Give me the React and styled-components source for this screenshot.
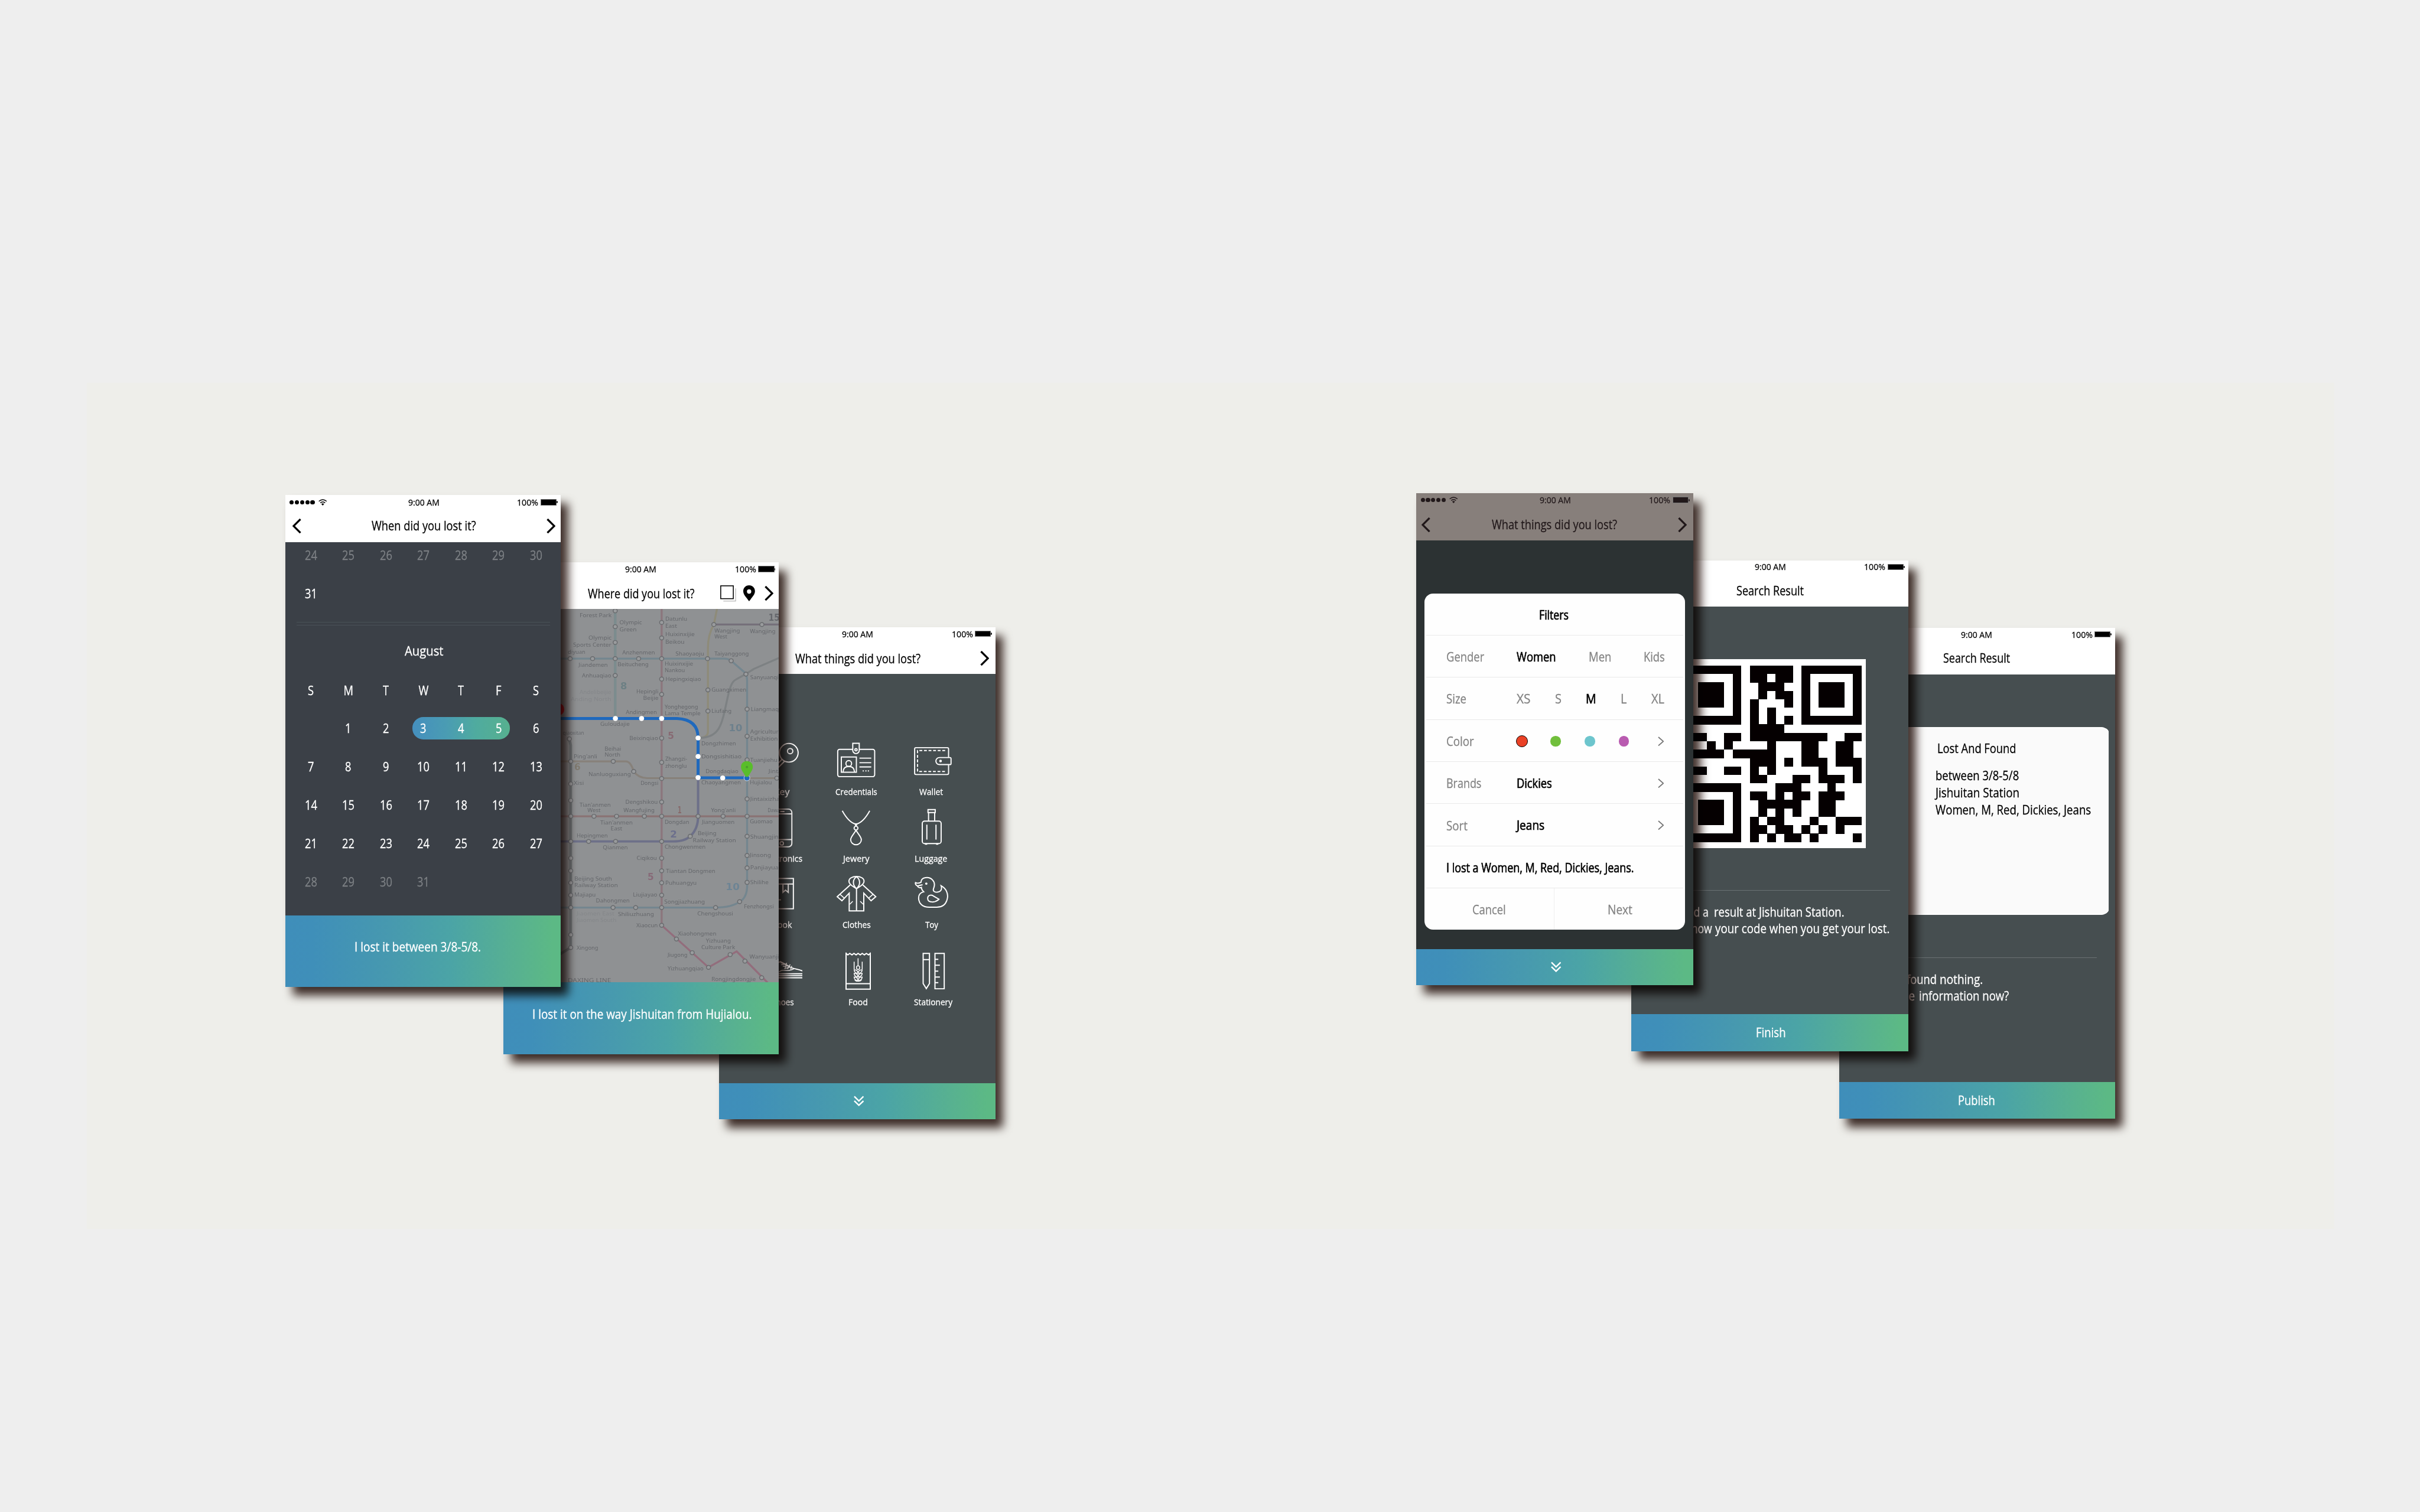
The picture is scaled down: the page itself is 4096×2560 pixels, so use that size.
import React, { useLayoutEffect, useRef, useState } from "react";
import styled, { createGlobalStyle, css } from "styled-components";

const GlobalStyle = createGlobalStyle`
  html, body { margin: 0; padding: 0; background: #eeeeee; overflow: hidden; }
  * { box-sizing: border-box; }
`;

const ramp = "linear-gradient(90deg, #3f8eba 0%, #3f8fb9 10%, #4799af 38%, #4ba4a6 60%, #57b092 82%, #5cb985 97%)";

/* ---------- canvas ---------- */

const Board = styled.main`
  position: relative;
  width: 4232px;
  height: 2645px;
  zoom: 0.967864;
  overflow: hidden;
  background: #eeeeee;
  font-family: "Open Sans", "Noto Sans", sans-serif;
  font-size: 22.5px;
  -webkit-text-stroke: 0.3px currentColor;
  color: #000;
`;

const Band = styled.div`
  position: absolute;
  left: 152px;
  top: 670px;
  width: 3930px;
  height: 1480px;
  background: #eeeeea;
`;

const place = css`
  position: absolute;
  left: ${(p) => p.$x}px;
  top: ${(p) => p.$y}px;
  width: ${(p) => p.$w}px;
  height: ${(p) => p.$h}px;
`;

const Shadow = styled.div`
  ${place}
  transform: translate(13px, 15px);
  background: #42312c;
  filter: blur(8px);
  mix-blend-mode: multiply;
`;

const Phone = styled.section`
  ${place}
  display: flex;
  flex-direction: column;
  overflow: hidden;
  background: ${(p) => p.$bg};
`;

/* ---------- fitted text ---------- */

const FitBox = styled.span`
  display: inline-flex;
  flex: none;
  width: ${(p) => p.$w + 2}px;
  margin: 0 -1px;
  line-height: 1.3;
`;

const FitInk = styled.span`
  flex: none;
  white-space: pre;
  transform-origin: 0 50%;
`;

function Fit({ w, children }) {
  const box = useRef(null);
  const ink = useRef(null);
  const [scale, setScale] = useState(1);
  useLayoutEffect(() => {
    const a = box.current.offsetWidth;
    const b = ink.current.offsetWidth;
    if (b) setScale(a / b);
  }, [w, children]);
  return (
    <FitBox $w={w} ref={box}>
      <FitInk ref={ink} style={{ transform: `scaleX(${scale})` }}>{children}</FitInk>
    </FitBox>
  );
}

/* ---------- header ---------- */

const Header = styled.header`
  flex: none;
  height: ${(p) => p.$h}px;
  background: ${(p) => (p.$dim ? "#877f7b" : "#ffffff")};
  color: ${(p) => (p.$dim ? "#21181a" : "#000000")};
`;

const StatusBar = styled.div`
  display: grid;
  grid-template-columns: 1fr auto 1fr;
  align-items: center;
  height: ${(p) => p.$h}px;
  padding: 0 6px 0 ${(p) => p.$left}px;
  font-size: 15px;
`;

const Signal = styled.div`
  display: flex;
  align-items: center;
  gap: 1.7px;
`;

const Dot = styled.i`
  width: 7.4px;
  height: 7.4px;
  border-radius: 50%;
  background: currentColor;
`;

const Power = styled.div`
  display: flex;
  align-items: center;
  justify-content: flex-end;
`;

const Battery = styled.i`
  width: 28px;
  height: 11px;
  margin-left: 4.5px;
  background: currentColor;
  border: 1.2px solid #777;
`;

const BatteryTip = styled.i`
  width: 2px;
  height: 4px;
  border-radius: 0 2px 2px 0;
  background: currentColor;
`;

const NavBar = styled.div`
  display: grid;
  grid-template-columns: 1fr auto 1fr;
  align-items: center;
  height: ${(p) => p.$h}px;
  padding: ${(p) => p.$top}px ${(p) => p.$right}px 0 ${(p) => p.$left}px;
`;

const NavActions = styled.div`
  display: flex;
  align-items: center;
  justify-content: flex-end;
`;

const WifiIcon = styled.svg`
  width: 15px;
  height: 11.5px;
  margin-left: 5px;
`;

const Arrow = styled.svg`
  width: 15.5px;
  height: 26px;
  display: block;
`;

const SquareIcon = styled.svg`
  width: 28px;
  height: 29px;
  margin: 1px 12.5px 0 0;
`;

const PinIcon = styled.svg`
  width: 20.5px;
  height: 28px;
  margin-right: 16px;
`;

const Back = () => (
  <Arrow viewBox="0 0 15.5 26"><path d="M14 1 L2 13 L14 25" fill="none" stroke="currentColor" strokeWidth="3.4" /></Arrow>
);
const Forward = () => (
  <Arrow viewBox="0 0 15.5 26"><path d="M1.5 1 L13.5 13 L1.5 25" fill="none" stroke="currentColor" strokeWidth="3.4" /></Arrow>
);

function PhoneHeader({ title, titleW, h = 82, status = 23.4, statusLeft = 7.5, top = 4, left = 10, right = 10, shift = 0, back, next, dim, children }) {
  return (
    <Header $h={h} $dim={dim}>
      <StatusBar $h={status} $left={statusLeft}>
        <Signal>
          {[0, 1, 2, 3, 4].map((i) => <Dot key={i} />)}
          <WifiIcon viewBox="0 0 15 11.5">
            <g fill="none" stroke="currentColor" strokeWidth="1.5">
              <path d="M0.7 3.9 Q7.5 -2 14.3 3.9" />
              <path d="M3.3 6.6 Q7.5 3 11.7 6.6" />
            </g>
            <path d="M5 8.6 Q7.5 6.6 10 8.6 L7.5 11.4 Z" fill="currentColor" />
          </WifiIcon>
        </Signal>
        <Fit w={52}>9:00 AM</Fit>
        <Power>
          <Fit w={35.5}>100%</Fit>
          <Battery />
          <BatteryTip />
        </Power>
      </StatusBar>
      <NavBar $h={h - status} $top={top} $left={left + shift} $right={right}>
        <div>{back && <Back />}</div>
        <Fit w={titleW}>{title}</Fit>
        <NavActions>{children}{next && <Forward />}</NavActions>
      </NavBar>
    </Header>
  );
}

/* ---------- footer ---------- */

const Footer = styled.footer`
  flex: none;
  display: flex;
  align-items: center;
  justify-content: center;
  height: ${(p) => p.$h}px;
  padding: 0 ${(p) => p.$pr || 0}px ${(p) => p.$pb || 0}px ${(p) => p.$pl || 0}px;
  background: ${ramp};
  color: #fff;
`;

const MoreIcon = styled.svg`
  width: 18px;
  height: 19px;
`;

const More = () => (
  <MoreIcon viewBox="0 0 18 19">
    <path d="M1 1.5 L9 9.3 L17 1.5 M1 9.3 L9 17 L17 9.3" fill="none" stroke="#fff" strokeWidth="2.5" />
  </MoreIcon>
);

/* ---------- calendar ---------- */

const Calendar = styled.div`
  flex: 1;
  color: #fff;
`;

const Week = styled.div`
  display: grid;
  grid-template-columns: repeat(7, 65.7px);
  justify-items: center;
  align-items: center;
  height: ${(p) => p.$h || 67}px;
  margin: ${(p) => p.$mt || 0}px 0 0 11.6px;
  color: ${(p) => (p.$muted ? "#7d8085" : "#ffffff")};
`;

const Day = styled.span`
  grid-row: 1;
  transform: scaleX(0.84);
`;

const MonthRule = styled.div`
  height: 6px;
  margin: 17px 19px 11.5px 20px;
  border: solid #495157;
  border-width: 1.3px 0;
`;

const Month = styled.div`
  display: flex;
  align-items: center;
  justify-content: center;
  height: 67px;
  padding-left: 3px;
`;

const Range = styled.i`
  grid-row: 1;
  grid-column: 4 / 7;
  width: 171px;
  height: 38.4px;
  border-radius: 19px;
  background: linear-gradient(90deg, #458fbe, #4a9cb3 35%, #4fab9f 65%, #57b08f);
`;

function WeekRow({ days, range, ...rest }) {
  return (
    <Week {...rest}>
      {range && <Range />}
      {days.map((d, i) => <Day key={i} style={{ gridColumn: i + 1 }}>{d}</Day>)}
    </Week>
  );
}

const span = (a, b) => Array.from({ length: b - a + 1 }, (_, i) => a + i);

/* ---------- subway map ---------- */

const MapSvg = styled.svg`
  flex: 1;
  min-height: 0;
  width: 100%;
  display: block;
  background: #8f9193;
  -webkit-text-stroke: 0;
`;

const labels = [
  ["Forest Park", 445, 608, 357], ["Olympic", 648, 762, 397], ["Green", 648, 735, 432],
  ["Olympic", 490, 608, 477], ["Sports Center", 412, 606, 513], ["Datunlu", 880, 992, 376],
  ["East", 880, 940, 415], ["Huixinxijie", 880, 1030, 459], ["Beikou", 880, 978, 498],
  ["Wangjing", 1130, 1260, 438], ["West", 1130, 1195, 470], ["Wangjing", 1310, 1440, 443],
  ["diyuan", 385, 475, 552], ["Anzhenmen", 662, 828, 553], ["Shaoyaoju", 932, 1078, 560],
  ["Taiyanggong", 1130, 1305, 560], ["Jiandemen", 440, 588, 618], ["Beitucheng", 638, 796, 616],
  ["Huixinxijie", 877, 1022, 613], ["Nankou", 877, 980, 648], ["Anhuaqiao", 457, 606, 674],
  ["Hepingxiqiao", 882, 1062, 694], ["Sanyuanqiao", 1312, 1490, 685], ["Guangximen", 1115, 1292, 748],
  ["Hepingli", 733, 846, 757], ["Beijie", 768, 846, 792], ["Liufang", 1115, 1217, 862],
  ["Liangmaqiao", 1315, 1500, 852], ["Andingmen", 680, 838, 868], ["Yonghegong", 877, 1047, 840],
  ["Lama Temple", 877, 1060, 874], ["Guloudajie", 550, 700, 930], ["Beixinqiao", 698, 844, 1002],
  ["qiaoxitan", 360, 468, 974], ["Dongzhimen", 1063, 1240, 1030], ["Agricultural", 1312, 1480, 970],
  ["Exhibition", 1312, 1452, 1005], ["Beihai", 572, 656, 1058], ["North", 572, 652, 1090],
  ["Ping'anli", 415, 535, 1098], ["Zhangzi-", 880, 992, 1112], ["zhonglu", 880, 990, 1150],
  ["Dongsishitiao", 1063, 1268, 1098], ["Tuanjiehu", 1312, 1450, 1118], ["Nanluoguxiang", 490, 706, 1193],
  ["Dongdaqiao", 1085, 1252, 1177], ["Jintai", 1405, 1480, 1177], ["Xisi", 415, 467, 1240],
  ["Dongsi", 755, 845, 1238], ["Chaoyangmen", 1063, 1265, 1237], ["Hujialou", 1310, 1422, 1237],
  ["Jintaixizhao", 1312, 1480, 1322], ["Tian'anmen", 445, 603, 1352], ["West", 485, 552, 1382],
  ["Dengshikou", 678, 842, 1338], ["Wangfujing", 668, 826, 1382], ["Yong'anli", 1113, 1238, 1380],
  ["Dawang", 1400, 1490, 1380], ["Tian'anmen", 550, 715, 1446], ["East", 603, 662, 1477],
  ["Dongdan", 877, 1002, 1442], ["Jianguomen", 1067, 1232, 1442], ["Guomao", 1310, 1426, 1440],
  ["Hepingmen", 430, 588, 1513], ["Beijing", 1045, 1140, 1503], ["Railway Station", 1020, 1240, 1539],
  ["Shuangjing", 1312, 1475, 1520], ["Qianmen", 563, 690, 1576], ["Chongwenmen", 877, 1085, 1574],
  ["Jinsong", 1310, 1418, 1618], ["Ciqikou", 735, 838, 1633], ["Panjiayuan", 1312, 1475, 1683],
  ["Tiantan Dongmen", 884, 1135, 1700], ["Puhuangyu", 880, 1040, 1762], ["Shilihe", 1312, 1405, 1760],
  ["Beijing South", 418, 610, 1742], ["Railway Station", 418, 640, 1775], ["Majiapu", 418, 527, 1824],
  ["Liujiayao", 716, 840, 1826], ["Songjiazhuang", 875, 1082, 1863], ["Dahongmen", 528, 700, 1857],
  ["Fenzhongsi", 1280, 1432, 1885], ["Shiliuzhuang", 640, 823, 1927], ["Chengshousi", 1043, 1225, 1924],
  ["Xiaocun", 733, 842, 1985], ["Xiaohongmen", 945, 1140, 2028], ["Yizhuang", 1087, 1213, 2065],
  ["Culture Park", 1063, 1235, 2101], ["Jiugong", 892, 993, 2140], ["Yizhuangqiao", 892, 1075, 2211],
  ["Wanyuanjie", 1308, 1475, 2150], ["Rongjingdongjie", 1115, 1340, 2268], ["Xingong", 430, 540, 2103],
];

const faint = [
  ["Andelibeijie", 445, 606, 762], ["Anding North", 400, 606, 798],
  ["Jiaomen East", 430, 622, 1925], ["Jiaomen South", 430, 632, 1958],
];

const lineNumbers = [
  ["15", 1405, 1462, 377, "#65676c"], ["8", 652, 686, 738, "#6d8084"], ["5", 893, 925, 997, "#876a73"],
  ["10", 1203, 1272, 957, "#6d808c"], ["6", 418, 450, 1160, "#807a70"], ["1", 943, 963, 1386, "#86696a"],
  ["2", 905, 940, 1515, "#6c6f8c"], ["5", 790, 822, 1738, "#876a78"], ["10", 1188, 1258, 1790, "#6d8494"],
];

const stations = [
  [626, 325], [626, 408], [626, 491], [626, 576], [626, 664], [862, 386], [862, 467], [862, 576], [862, 683],
  [862, 763], [862, 993], [862, 1120], [862, 1205], [862, 1328], [862, 1403], [862, 1535], [862, 1623],
  [862, 1689], [862, 1752], [862, 1817], [862, 1882], [862, 1975], [1127, 397], [1371, 397], [397, 576],
  [511, 576], [745, 576], [1095, 576], [1215, 587], [1290, 657], [1097, 740], [1097, 851], [1296, 841],
  [1296, 983], [1296, 1107], [1296, 1312], [1296, 1403], [1296, 1508], [1296, 1609], [1296, 1674],
  [1296, 1750], [1258, 1851], [1136, 1882], [730, 1882], [615, 1882], [400, 1882], [400, 1115], [400, 1233],
  [400, 1320], [400, 1403], [400, 1535], [400, 1623], [400, 1689], [400, 1752], [400, 1817], [400, 2025],
  [400, 2092], [393, 997], [616, 1115], [720, 1168], [1447, 1203], [518, 1403], [633, 1403], [774, 1403],
  [1047, 1403], [1174, 1403], [1007, 1508], [628, 1535], [491, 1535], [937, 2047], [1017, 2119],
  [1100, 2196], [1210, 2129], [1285, 2163], [1370, 2250],
];

const SubwayMap = () => (
  <MapSvg viewBox="58 315 1400 1959" preserveAspectRatio="none">
    <g fill="none" strokeWidth="10">
      <path d="M626 315 V890" stroke="#7c8c8e" strokeWidth="13" />
      <path d="M862 315 V1975" stroke="#8b767d" />
      <path d="M862 1975 L1100 2196 L1243 2112 L1400 2276" stroke="#936d7c" />
      <path d="M1143 315 L1127 397 Q1097 450 1097 520 V960 Q1097 992 1047 992" stroke="#8e8b79" />
      <path d="M1127 397 H1458" stroke="#75707a" />
      <path d="M340 576 H1180 Q1200 576 1215 587 L1280 645 Q1296 660 1296 690 V1750 Q1300 1830 1258 1851 Q1220 1882 1136 1882 H340" stroke="#74868f" />
      <path d="M1047 992 C1140 992 1160 940 1175 880 C1200 780 1205 700 1240 685 Q1290 657 1330 630 L1458 572" stroke="#7d8183" />
      <path d="M340 1115 H680 Q705 1115 720 1168 Q745 1203 790 1203 H1458" stroke="#87817a" />
      <path d="M340 1403 H1458" stroke="#8a7374" />
      <path d="M1047 1203 V1403 Q1047 1470 1007 1508 Q980 1535 920 1535 H340" stroke="#6d7089" strokeWidth="12" />
      <path d="M393 997 L400 1030 V2080 L400 2092 L340 2130" stroke="#6e7375" strokeWidth="14" />
    </g>
    <g fill="#999b9d" stroke="#696b6e" strokeWidth="4.5">
      {stations.map(([x, y], i) => <circle key={i} cx={x} cy={y} r="10.5" />)}
    </g>
    <g fontSize="29" fill="#66686c" fontFamily="Noto Sans, sans-serif">
      {labels.map(([t, a, b, y], i) => (
        <text key={i} x={a} y={y} textLength={b - a} lengthAdjust="spacingAndGlyphs">{t}</text>
      ))}
      {faint.map(([t, a, b, y], i) => (
        <text key={i} x={a} y={y} textLength={b - a} lengthAdjust="spacingAndGlyphs" fill="#85878a">{t}</text>
      ))}
      <text x="385" y="2273" textLength="220" lengthAdjust="spacingAndGlyphs">DAXING LINE</text>
    </g>
    <g fontSize="50" fontWeight="700" fontFamily="DejaVu Sans, sans-serif">
      {lineNumbers.map(([t, a, b, y, c], i) => (
        <text key={i} x={a} y={y} textLength={b - a} lengthAdjust="spacingAndGlyphs" fill={c}>{t}</text>
      ))}
    </g>
    <path d="M340 890 H940 Q1047 895 1047 992 V1201 H1295" fill="none" stroke="#1f69bd" strokeWidth="15" />
    <g fill="#fff">
      {[[627, 890], [760, 890], [862, 890], [1047, 992], [1047, 1089], [1047, 1200], [1172, 1202]].map(([x, y], i) => (
        <circle key={i} cx={x} cy={y} r="13" />
      ))}
    </g>
    <ellipse cx="344" cy="842" rx="23" ry="30" fill="#b8161d" />
    <circle cx="1295" cy="1202" r="15" fill="#1f69bd" stroke="#d5dde6" strokeWidth="3" />
    <path d="M1295 1114 C1273 1114 1265 1130 1265 1145 C1265 1163 1280 1174 1288 1196 H1302 C1310 1174 1325 1163 1325 1145 C1325 1130 1317 1114 1295 1114 Z" fill="#59bd2b" />
    <circle cx="1295" cy="1145" r="6" fill="#4b9a2e" />
  </MapSvg>
);

/* ---------- category grid ---------- */

const Categories = styled.div`
  flex: 1;
  display: grid;
  grid-template-columns: repeat(3, 130.7px);
  grid-template-rows: 117px 116px 135px 101px;
  padding: 115px 0 0 44.3px;
  color: #fff;
  font-size: 15px;
`;

const Tile = styled.div`
  display: flex;
  flex-direction: column;
  align-items: center;
`;

const TileLabel = styled.div`
  height: 20px;
  margin-top: 8px;
  padding-left: ${(p) => p.$shift * 2}px;
`;

const TileIcon = styled.svg`
  width: 72px;
  height: 72px;
  flex: none;
  fill: none;
  stroke: #fff;
  stroke-width: 6;
`;

const skin = "#464e50";

const tiles = [
  { name: "Key", w: 25, box: "242 672 216 216", art: (
    <>
      <circle cx="388" cy="742" r="49" />
      <circle cx="395" cy="733" r="14" />
      <path d="M352 777 L262 867 M366 786 L285 868" />
    </>
  ) },
  { name: "Credentials", w: 70.7, box: "634 672 216 216", art: (
    <>
      <rect x="646" y="724" width="194" height="143" rx="10" />
      <path d="M725 692 H759 V729 a17 17 0 0 1 -34 0 Z" fill={skin} />
      <circle cx="742" cy="726" r="6" />
      <rect x="665" y="764" width="79" height="80" />
      <circle cx="704" cy="798" r="15" />
      <path d="M674 842 C675 822 688 814 704 814 S733 822 734 842" />
      <path d="M760 770 H822 M760 794 H822 M760 816 H822" />
      <path d="M777 837 h6 M791 837 h6 M804 837 h6" />
    </>
  ) },
  { name: "Wallet", w: 39.5, box: "1026 672 216 216", art: (
    <>
      <rect x="1048" y="715" width="178" height="141" rx="7" />
      <path d="M1208 730 H1063 V840 H1215" strokeDasharray="15 9" />
      <path d="M1233 767 H1178 a18.5 18.5 0 0 0 0 37 H1233 q6 0 6 -6 V773 q0 -6 -6 -6 Z" fill={skin} />
      <circle cx="1184" cy="785" r="4" fill="#fff" />
    </>
  ) },
  { name: "Electronics", w: 70, box: "242 1023 216 216", art: (
    <>
      <rect x="270" y="1035" width="134" height="198" rx="18" />
      <path d="M270 1060 H404 M270 1195 H404 M343 1048 h22" />
      <circle cx="351" cy="1215" r="9" />
    </>
  ) },
  { name: "Jewery", w: 44, box: "634 1023 216 216", art: (
    <>
      <path d="M670 1044 C692 1084 715 1109 742 1114 C769 1109 792 1084 814 1044" />
      <circle cx="742" cy="1116" r="4" />
      <circle cx="742" cy="1135" r="10" />
      <path d="M742 1146 C736 1160 714 1180 714 1196 a28 26 0 0 0 56 0 C770 1180 748 1160 742 1146 Z" />
    </>
  ) },
  { name: "Luggage", w: 55, box: "1026 1023 216 216", art: (
    <>
      <path d="M1118 1038 h38 v15 h-38 Z M1121 1053 V1098 M1153 1053 V1098" />
      <rect x="1088" y="1098" width="99" height="118" rx="12" />
      <path d="M1112 1117 V1195 M1160 1117 V1195 M1102 1219 h12 M1160 1219 h12" />
    </>
  ) },
  { name: "Book", w: 33, shift: 1.5, box: "263.5 81 209 216", art: (
    <>
      <rect x="300" y="110" width="128" height="159" />
      <path d="M300 139 H428 M375 139 V183 L388 171 L402 183 V139 M345 222 h20" />
    </>
  ) },
  { name: "Clothes", w: 47.5, shift: 1, box: "643 81 209 216", art: (
    <>
      <path d="M712 128 C706 90 794 90 788 128 C785 146 764 152 750 164 C736 152 715 146 712 128 Z" />
      <path d="M750 101 C729 116 729 144 750 163 C771 144 771 116 750 101 Z" />
      <path d="M718 144 L652 206 L676 227 L713 187 V280 H787 V187 L824 227 L848 206 L782 144 M750 164 V280" />
      <path d="M666 193 L689 214 M834 193 L811 214 M716 245 L731 230 M784 245 L769 230" strokeWidth="4.5" />
    </>
  ) },
  { name: "Toy", w: 21, shift: 1, box: "1022.5 81 209 216", art: (
    <>
      <path d="M1076 130 C1076 102 1116 98 1134 117 C1150 134 1144 152 1139 166 C1136 178 1148 183 1158 182 C1178 180 1184 166 1178 148 C1204 162 1215 190 1210 214 C1204 246 1184 261 1156 261 H1118 C1084 261 1064 242 1064 212 C1064 196 1074 184 1090 180 C1082 172 1078 166 1078 157 C1070 160 1060 158 1058 149 C1050 146 1046 138 1048 132 C1058 138 1068 134 1076 130 Z M1058 149 L1084 143" />
      <circle cx="1103" cy="137" r="3" fill="#fff" />
      <path d="M1110 214 C1110 198 1128 192 1142 204 L1167 219 C1150 238 1110 240 1110 214 Z" />
    </>
  ) },
  { name: "Shoes", w: 37, shift: 2, box: "263.5 486 209 216", art: (
    <>
      <path d="M290 545 C310 575 335 560 362 545 L406 570 C425 588 485 584 486 610 V630 H280 V560 Z M280 609 H486 M280 619 H486" />
      <path d="M362 550 l22 8 M366 562 l26 -4 M374 570 l28 -2 M382 582 l30 -8 M394 552 l-8 26 M412 560 l-14 24 M420 568 l-6 18 M355 600 C376 578 398 606 432 582" strokeWidth="4.5" />
    </>
  ) },
  { name: "Food", w: 32.4, shift: 3.5, box: "643 486 209 216", art: (
    <>
      <path d="M697 498 V690 H820 V498 M697 661 H820" />
      <path d="M697 502 l9 8 l10 -8 l11 8 l10 -8 l11 8 l10 -8 l11 8 l10 -8 l11 8 l10 -8 l11 8 l9 -8" />
      <g strokeWidth="4.5">
        <path d="M758 528 V566 M738 546 V585 M779 546 V585" />
        <ellipse cx="758" cy="577" rx="8" ry="10" />
        {[598, 617, 636].map((y) => (
          <g key={y}>
            <path d={`M758 ${y + 8} C748 ${y + 10} 738 ${y + 2} 738 ${y - 10} C748 ${y - 10} 757 ${y - 4} 758 ${y + 8} Z`} />
            <path d={`M758 ${y + 8} C768 ${y + 10} 779 ${y + 2} 779 ${y - 10} C768 ${y - 10} 759 ${y - 4} 758 ${y + 8} Z`} />
          </g>
        ))}
        <path d="M741 640 Q746 650 758 648 Q770 650 776 640" />
      </g>
    </>
  ) },
  { name: "Stationery", w: 64.7, shift: 4, box: "1022.5 486 209 216", art: (
    <>
      <path d="M1087 502 H1119 V660 L1103 687 L1087 660 Z M1087 535 H1119" />
      <path d="M1147 502 H1194 V688 H1147 Z M1147 533 h17 M1147 564 h25 M1147 595 h17 M1147 626 h25 M1147 656 h17" />
    </>
  ) },
];

/* ---------- filter dialog ---------- */

const DimBody = styled.div`
  flex: 1;
  padding: 92.7px 14px 0 13.7px;
`;

const Dialog = styled.div`
  height: 588px;
  display: grid;
  grid-template-rows: 73.7px 73px 74.3px 74.3px 72.8px 75px 72.7px 1fr;
  border-radius: 15px;
  background: #fefefe;
`;

const DialogRow = styled.div`
  display: flex;
  align-items: center;
  margin: 0 3px;
  padding: 2px 34px 0 36.3px;
  border-bottom: 1.5px solid #e9e9e9;
  color: #838383;
`;

const DialogTitle = styled(DialogRow)`
  justify-content: center;
  padding: 2px 2px 0 0;
  color: #000;
  -webkit-text-stroke-width: 0.75px;
`;

const Summary = styled(DialogRow)`
  color: #000;
  -webkit-text-stroke-width: 0.75px;
`;

const RowName = styled.div`
  flex: none;
  width: 123.3px;
`;

const Options = styled.div`
  flex: 1;
  display: flex;
  align-items: center;
  justify-content: space-between;
`;

const Option = styled.span`
  display: inline-flex;
  color: ${(p) => (p.$on ? "#000" : "#838383")};
  -webkit-text-stroke: ${(p) => (p.$on ? 0.75 : 0.3)}px currentColor;
`;

const Swatches = styled.div`
  display: flex;
  gap: 38.9px;
  margin-left: -2.3px;
`;

const Swatch = styled.i`
  width: 20.6px;
  height: 20.6px;
  border-radius: 50%;
  background: ${(p) => p.$c} content-box;
  padding: ${(p) => (p.$on ? 0 : 1.5)}px;
  border: ${(p) => (p.$on ? "1.5px solid #000" : "0")};
  background-clip: ${(p) => (p.$on ? "border-box" : "content-box")};
`;

const SmallArrow = styled.svg`
  width: 11px;
  height: 17px;
`;

const Chevron = () => (
  <SmallArrow viewBox="0 0 11 17"><path d="M1 1 L9.6 8.5 L1 16" fill="none" stroke="#757575" strokeWidth="1.8" /></SmallArrow>
);

const Buttons = styled.div`
  display: grid;
  grid-template-columns: 227px 1fr;
  color: #838383;
`;

const DialogButton = styled.div`
  display: flex;
  align-items: center;
  justify-content: center;
  padding-top: 2px;
  & + & { border-left: 2px solid #eeeeee; }
`;

/* ---------- results ---------- */

const ResultBody = styled.div`
  flex: 1;
  color: #fff;
  padding-top: ${(p) => p.$pt}px;
`;

const Code = styled.svg`
  display: block;
  width: 331px;
  height: 330px;
  margin-left: 79px;
  background: #fff;
`;

const Rule = styled.div`
  height: 1.5px;
  margin: ${(p) => p.$mt}px 32px 0 33px;
  background: #6a7173;
`;

const Copy = styled.div`
  display: flex;
  flex-direction: column;
  padding: 22.5px 0 0 ${(p) => p.$pl}px;
`;

const CopyLine = styled.div`
  display: flex;
  align-items: center;
  height: 29.3px;
  gap: ${(p) => p.$gap}px;
`;

const Card = styled.div`
  height: 328px;
  margin: 0 12px;
  padding: 22px 0 0 157.5px;
  border-radius: 16px / 9px;
  background: #fafafa;
  box-shadow: inset 0 0 0 1.5px #fff;
  color: #000;
`;

const CardTitle = styled.div`
  display: flex;
  align-items: center;
  height: 30px;
  padding-left: 3.5px;
  margin-bottom: 18px;
`;

const CardLine = styled.div`
  display: flex;
  align-items: center;
  height: 29.8px;
`;

const F = ["#######", "#.....#", "#.###.#", "#.###.#", "#.###.#", "#.....#", "#######"];
const middle = [
  "#####.", "##.##.", ".###..", ".#.##.", "#...#.", "#.#...", "#.#.#.",
];
const modules = [
  ...F.map((f, i) => f + "." + middle[i] + f),
  "........####.........",
  "###..##.#########..##",
  "...#.#....#...##..##.",
  "#####.#####...##..##.",
  "........###.#.###.###",
  "###..##.#.#.....#...#",
  "........##...##.###.#",
  F[0] + "....###...#...",
  F[1] + ".##.#.##.###..",
  F[2] + "..#####..##...",
  F[3] + "..#.#.#..##...",
  F[4] + ".#.##...#..###",
  F[5] + ".##.##.#.#.#..",
  F[6] + ".#.#.##.#....#",
];

const QrCode = () => (
  <Code viewBox="0 0 331 330" shapeRendering="crispEdges">
    {modules.flatMap((row, y) =>
      [...row].map((c, x) =>
        c === "#" ? <rect key={`${x}-${y}`} x={7.5 + x * 15.03} y={11.3 + y * 14.69} width="15.4" height="15" fill="#050001" /> : null
      )
    )}
  </Code>
);

/* ---------- screens ---------- */

function Screen({ x, y, w, h, bg, children }) {
  const box = { $x: x, $y: y, $w: w, $h: h };
  return (
    <>
      <Shadow {...box} />
      <Phone {...box} $bg={bg}>{children}</Phone>
    </>
  );
}

export default function App() {
  return (
    <>
      <GlobalStyle />
      <Board>
        <Band />

        <Screen x={1257} y={1097} w={484} h={861} bg={skin}>
          <PhoneHeader title="What things did you lost?" titleW={217} back next right={11} shift={3} />
          <Categories>
            {tiles.map((t) => (
              <Tile key={t.name}>
                <TileIcon viewBox={t.box} preserveAspectRatio="none">{t.art}</TileIcon>
                <TileLabel $shift={t.shift || 0}><Fit w={t.w}>{t.name}</Fit></TileLabel>
              </Tile>
            ))}
          </Categories>
          <Footer $h={63} $pl={6}><More /></Footer>
        </Screen>

        <Screen x={880} y={984} w={482} h={860} bg="#8f9193">
          <PhoneHeader title="Where did you lost it?" titleW={184} h={81} statusLeft={4} back next>
            <SquareIcon viewBox="0 0 28 29">
              <path d="M5.5 27.5 H27 V5.5" fill="none" stroke="#b5b5b5" strokeWidth="1.2" />
              <rect x="0.9" y="0.9" width="22" height="22.5" fill="#fff" stroke="#000" strokeWidth="1.6" />
            </SquareIcon>
            <PinIcon viewBox="0 0 20.5 28">
              <path fillRule="evenodd" d="M10.25 0 C4 0 0 4.6 0 10.3 C0 17 6.5 22 10.25 28 C14 22 20.5 17 20.5 10.3 C20.5 4.6 16.5 0 10.25 0 Z M10.25 7 a3.8 3.8 0 1 1 0 7.6 a3.8 3.8 0 1 1 0 -7.6 Z" />
            </PinIcon>
          </PhoneHeader>
          <SubwayMap />
          <Footer $h={126} $pb={14} $pl={4}><Fit w={382}>I lost it on the way Jishuitan from Hujialou.</Fit></Footer>
        </Screen>

        <Screen x={499} y={866} w={482} h={860} bg="#3b4047">
          <PhoneHeader title="When did you lost it?" titleW={180} h={83} status={25} top={0} left={12} back next />
          <Calendar>
            <WeekRow $h={43} $muted days={span(24, 30)} />
            <WeekRow $mt={12} days={[31]} />
            <MonthRule />
            <Month><Fit w={66}>August</Fit></Month>
            <WeekRow $mt={1} days={["S", "M", "T", "W", "T", "F", "S"]} />
            <WeekRow range days={["", ...span(1, 6)]} />
            <WeekRow days={span(7, 13)} />
            <WeekRow days={span(14, 20)} />
            <WeekRow days={span(21, 27)} />
            <WeekRow $muted days={span(28, 31)} />
          </Calendar>
          <Footer $h={125} $pb={14} $pr={19}><Fit w={219}>I lost it between 3/8-5/8.</Fit></Footer>
        </Screen>

        <Screen x={3216} y={1098} w={483} h={859} bg={skin}>
          <PhoneHeader title="Search Result" titleW={115} h={81.7} top={2} statusLeft={4} right={11} />
          <ResultBody $pt={92.3}>
            <Card>
              <CardTitle><Fit w={136}>Lost And Found</Fit></CardTitle>
              <CardLine><Fit w={144}>between 3/8-5/8</Fit></CardLine>
              <CardLine><Fit w={145}>Jishuitan Station</Fit></CardLine>
              <CardLine><Fit w={270}>Women, M, Red, Dickies, Jeans</Fit></CardLine>
            </Card>
            <Rule $mt={74.5} />
            <Copy $pl={32}>
              <CopyLine $gap={6.5}><Fit w={138}>Sorry, we found</Fit><Fit w={74}>nothing.</Fit></CopyLine>
              <CopyLine $gap={9.5}><Fit w={99}>Publish the</Fit><Fit w={155}>information now?</Fit></CopyLine>
            </Copy>
          </ResultBody>
          <Footer $h={64} $pr={2}><Fit w={62.7}>Publish</Fit></Footer>
        </Screen>

        <Screen x={2853} y={980} w={484} h={859} bg={skin}>
          <PhoneHeader title="Search Result" titleW={116} h={81} top={2} shift={2} />
          <ResultBody $pt={92.5}>
            <QrCode />
            <Rule $mt={73.5} />
            <Copy $pl={38}>
              <CopyLine $gap={11.5}><Fit w={96}>We found a</Fit><Fit w={226}>result at Jishuitan Station.</Fit></CopyLine>
              <CopyLine $gap={7}><Fit w={102}>Please show</Fit><Fit w={303}>your code when you get your lost.</Fit></CopyLine>
            </Copy>
          </ResultBody>
          <Footer $h={65} $pl={2}><Fit w={49.6}>Finish</Fit></Footer>
        </Screen>

        <Screen x={2477} y={863} w={484} h={860} bg="#2c3233">
          <PhoneHeader title="What things did you lost?" titleW={217} h={82.3} left={9} right={11} back next dim />
          <DimBody>
            <Dialog>
              <DialogTitle><Fit w={50}>Filters</Fit></DialogTitle>
              <DialogRow>
                <RowName><Fit w={64.3}>Gender</Fit></RowName>
                <Options>
                  <Option $on><Fit w={67.3}>Women</Fit></Option>
                  <Option><Fit w={38}>Men</Fit></Option>
                  <Option><Fit w={35}>Kids</Fit></Option>
                </Options>
              </DialogRow>
              <DialogRow>
                <RowName><Fit w={33.3}>Size</Fit></RowName>
                <Options>
                  <Option><Fit w={21.7}>XS</Fit></Option>
                  <Option><Fit w={9}>S</Fit></Option>
                  <Option $on><Fit w={16}>M</Fit></Option>
                  <Option><Fit w={9}>L</Fit></Option>
                  <Option><Fit w={20.7}>XL</Fit></Option>
                </Options>
              </DialogRow>
              <DialogRow>
                <RowName><Fit w={46}>Color</Fit></RowName>
                <Options>
                  <Swatches>
                    <Swatch $c="#ea4125" $on />
                    <Swatch $c="#71bf3c" />
                    <Swatch $c="#6dc5cd" />
                    <Swatch $c="#b95bb0" />
                  </Swatches>
                  <Chevron />
                </Options>
              </DialogRow>
              <DialogRow>
                <RowName><Fit w={59}>Brands</Fit></RowName>
                <Options><Option $on><Fit w={60}>Dickies</Fit></Option><Chevron /></Options>
              </DialogRow>
              <DialogRow>
                <RowName><Fit w={35}>Sort</Fit></RowName>
                <Options><Option $on><Fit w={47}>Jeans</Fit></Option><Chevron /></Options>
              </DialogRow>
              <Summary><Fit w={326}>I lost a Women, M, Red, Dickies, Jeans.</Fit></Summary>
              <Buttons>
                <DialogButton><Fit w={57}>Cancel</Fit></DialogButton>
                <DialogButton><Fit w={40.7}>Next</Fit></DialogButton>
              </Buttons>
            </Dialog>
          </DimBody>
          <Footer $h={62.7} $pl={5}><More /></Footer>
        </Screen>
      </Board>
    </>
  );
}
